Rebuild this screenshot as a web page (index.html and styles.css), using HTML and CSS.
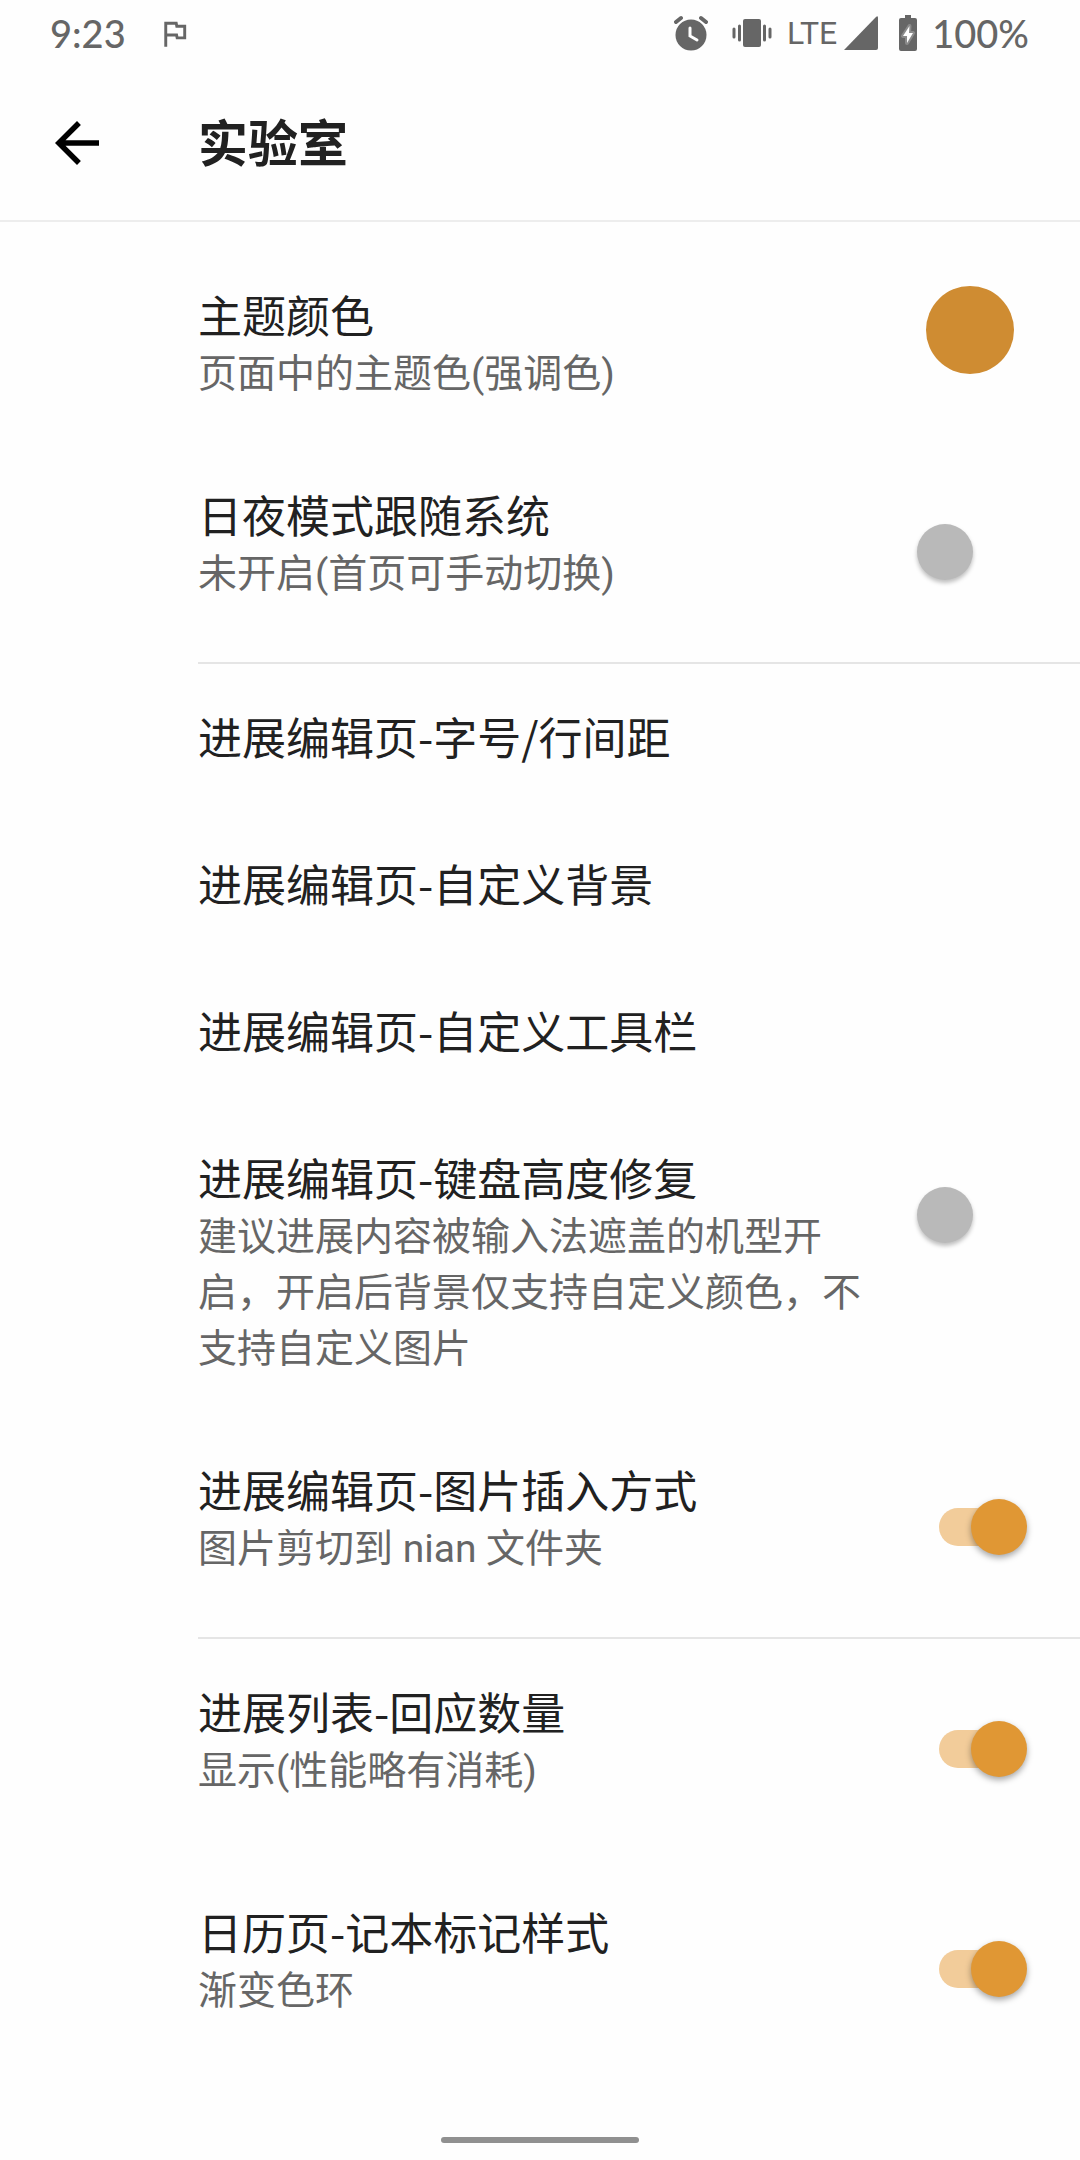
FILE: index.html
```html
<!DOCTYPE html>
<html lang="zh-Hans">
<head>
  <meta charset="UTF-8" />
  <meta name="viewport" content="width=device-width" />
  <title>实验室</title>
  <link rel="stylesheet" href="styles.css">
</head>
<body>
  <div class="status-bar">
    <span class="status-text">9:23</span>
    <svg class="icon-flag" viewBox="0 0 24 24"><path d="M12.36 6l.4 2H18v6h-3.36l-.4-2H7V6h5.36M14 4H5v17h2v-7h5.6l.4 2h7V6h-5.6L14 4z" /></svg>

    <div class="status-right">
      <svg class="icon-alarm" viewBox="0 0 34 36">
        <circle cx="17" cy="20" r="15.500" />
        <path class="line" d="M2 7l5-4M32 7l-5-4" />
        <path class="line light" d="M16 13v8l7 4" />
      </svg>
      <svg class="icon-vibrate" viewBox="0 0 40 30">
        <rect x="11" y="1" width="18" height="28" rx="2" />
        <path class="line" d="M7.500 8v14M2 11v8M32.500 8v14M38 11v8" />
      </svg>
      <span class="lte">LTE</span>
      <svg class="icon-signal" viewBox="0 0 34 34"><path d="M0 34L32 1q2-2 2 1v30q0 2-2 2z" /></svg>
      <svg class="icon-battery" viewBox="0 0 18 36">
        <path d="M6 0h6v3h4q2 0 2 2v29q0 2-2 2H2q-2 0-2-2V5q0-2 2-2h4z" />
        <path class="bolt" d="M10.500 11L4 21h4v7l6-10h-4z" />
      </svg>
      <span class="status-text">100%</span>
    </div>
  </div>

  <header class="toolbar">
    <button class="back" aria-label="返回">
      <svg viewBox="0 0 24 24"><path d="M20 11H7.83l5.59-5.59L12 4l-8 8 8 8 1.410-1.410L7.830 13H20v-2z" /></svg>
    </button>
    <h1>实验室</h1>
  </header>

  <main>
    <section class="group">
      <button class="row">
        <span class="text">
          <span class="name">主题颜色</span>
          <span class="desc">页面中的主题色(强调色)</span>
        </span>
        <span class="swatch"></span>
      </button>
      <label class="row row-switch">
        <span class="text">
          <span class="name">日夜模式跟随系统</span>
          <span class="desc">未开启(首页可手动切换)</span>
        </span>
        <input type="checkbox" class="switch" />
      </label>
    </section>

    <section class="group">
      <button class="row">
        <span class="text"><span class="name">进展编辑页-字号/行间距</span></span>
      </button>
      <button class="row">
        <span class="text"><span class="name">进展编辑页-自定义背景</span></span>
      </button>
      <button class="row">
        <span class="text"><span class="name">进展编辑页-自定义工具栏</span></span>
      </button>
      <label class="row row-switch">
        <span class="text">
          <span class="name">进展编辑页-键盘高度修复</span>
          <span class="desc">建议进展内容被输入法遮盖的机型开启，开启后背景仅支持自定义颜色，不支持自定义图片</span>
        </span>
        <input type="checkbox" class="switch" />
      </label>
      <label class="row row-switch">
        <span class="text">
          <span class="name">进展编辑页-图片插入方式</span>
          <span class="desc">图片剪切到 nian 文件夹</span>
        </span>
        <input type="checkbox" class="switch" checked />
      </label>
    </section>

    <section class="group">
      <label class="row row-switch">
        <span class="text">
          <span class="name">进展列表-回应数量</span>
          <span class="desc">显示(性能略有消耗)</span>
        </span>
        <input type="checkbox" class="switch" checked />
      </label>
      <label class="row row-switch">
        <span class="text">
          <span class="name">日历页-记本标记样式</span>
          <span class="desc">渐变色环</span>
        </span>
        <input type="checkbox" class="switch" checked />
      </label>
    </section>
  </main>

  <div class="nav-bar"><div class="pill"></div></div>
</body>
</html>
```

FILE: styles.css
```css
* {
  box-sizing: border-box;
}

body {
  margin: 0;
  min-height: 100vh;
  display: flex;
  flex-direction: column;
  background: #fefefe;
  color: #212121;
  font-family: Roboto, "Noto Sans CJK SC", sans-serif;
}

/* status bar */
.status-bar {
  display: flex;
  align-items: center;
  height: 66px;
  padding: 0 51px 0 50px;
  color: #666;
}

.status-bar svg {
  fill: #666;
}

.status-text {
  font-family: Lato, sans-serif;
  font-size: 38px;
  font-weight: 500;
}

.status-right {
  display: flex;
  align-items: center;
  margin-left: auto;
}

.line {
  fill: none;
  stroke: #666;
  stroke-width: 4;
  stroke-linecap: round;
}

.icon-vibrate .line {
  stroke-width: 3;
}

.status-right .light {
  stroke: #fefefe;
  stroke-width: 3;
}

.icon-flag {
  width: 35px;
  height: 35px;
  margin-left: 31px;
}

.icon-alarm {
  width: 34px;
  height: 36px;
  margin-right: 24px;
}

.icon-vibrate {
  width: 40px;
  height: 30px;
  margin-right: 15px;
}

.lte {
  margin-right: 7px;
  font-size: 32px;
}

.icon-signal {
  width: 34px;
  height: 34px;
  margin-right: 21px;
}

.icon-battery {
  width: 18px;
  height: 36px;
  margin-right: 15px;
}

.status-bar .bolt {
  fill: #fefefe;
  stroke: #8a8a8a;
  stroke-width: 4;
  stroke-linejoin: round;
  paint-order: stroke;
}

/* toolbar */
.toolbar {
  display: flex;
  align-items: center;
  height: 156px;
  padding-left: 44px;
  border-bottom: 2px solid #ededed;
}

.back {
  width: 66px;
  height: 66px;
  margin-right: 88px;
  padding: 0;
  border: 0;
  background: none;
}

.back svg {
  display: block;
  width: 66px;
  height: 66px;
}

h1 {
  margin: 0;
  padding-bottom: 6px;
  font-family: "Noto Sans CJK SC", sans-serif;
  font-size: 50px;
  font-weight: 700;
}

/* settings list */
main {
  padding-top: 20px;
}

.group {
  margin-left: 198px;
}

.group + .group {
  border-top: 2px solid #e5e5e5;
}

.row {
  display: flex;
  align-items: flex-start;
  width: 100%;
  min-height: 147px;
  padding: 0 53px 0 0;
  border: 0;
  background: none;
  color: inherit;
  font: inherit;
  text-align: left;
}

.row-switch {
  min-height: 220px;
}

.text {
  flex: 1;
  margin-right: 44px;
  padding: 41px 0 40px;
}

.name,
.desc {
  display: block;
}

.name {
  font-family: "Noto Sans CJK SC", sans-serif;
  font-size: 44px;
  line-height: 63px;
}

.desc {
  color: #666;
  font-size: 39px;
  line-height: 56px;
}

.swatch {
  width: 88px;
  height: 88px;
  margin: 44px 13px 0 0;
  border-radius: 50%;
  background: #cf8c32;
}

.switch {
  appearance: none;
  position: relative;
  flex: none;
  width: 110px;
  height: 56px;
  margin: 82px 0 0;
}

.switch::before {
  content: "";
  position: absolute;
  left: 22px;
  top: 9px;
  width: 66px;
  height: 38px;
  border-radius: 19px;
}

.switch::after {
  content: "";
  position: absolute;
  left: 0;
  top: 0;
  width: 56px;
  height: 56px;
  border-radius: 50%;
  background: #b9b9b9;
  box-shadow: 0 3px 4px rgba(0, 0, 0, 0.25);
}

.switch:checked::before {
  background: #f2cc9a;
}

.switch:checked::after {
  left: 54px;
  background: #e09734;
  box-shadow: 0 3px 6px rgba(0, 0, 0, 0.35);
}

/* gesture bar */
.nav-bar {
  display: flex;
  justify-content: center;
  margin-top: auto;
  padding-bottom: 17px;
}

.pill {
  width: 198px;
  height: 6px;
  border-radius: 3px;
  background: #909090;
}
```
